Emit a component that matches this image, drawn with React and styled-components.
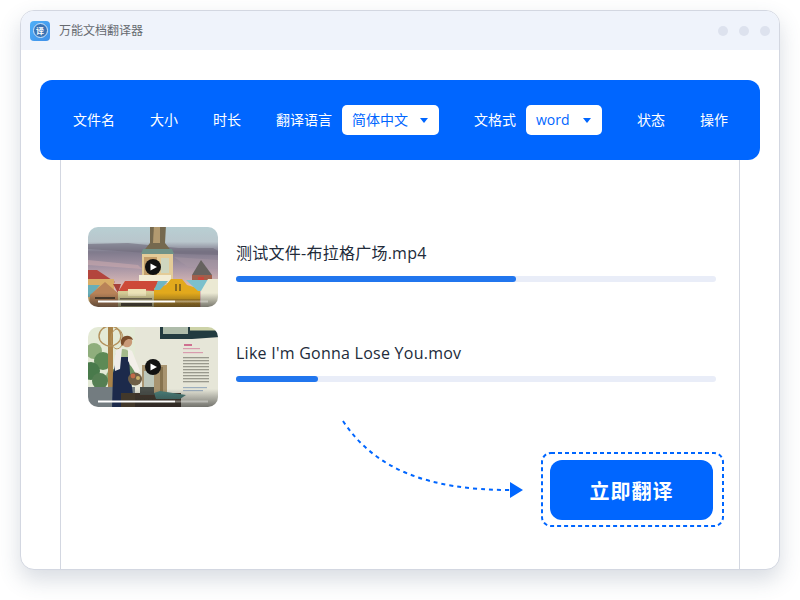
import React from 'react'
import styled, { createGlobalStyle } from 'styled-components'

const files = [
  { id: 1, name: '测试文件-布拉格广场.mp4', progress: 280, Picture: PragueScene },
  { id: 2, name: "Like I'm Gonna Lose You.mov", progress: 82, Picture: GardenScene },
]

function PragueScene() {
  return (
    <g filter="url(#soft)">
      <rect x="-2" y="-2" width="134" height="84" fill="url(#praguesky)" />
      <path d="M0 17 L40 16 L90 21 L125 21 L130 24 L130 28 L60 26 L0 22Z" fill="#6f6a7c" opacity=".6" />
      <path d="M0 33 L50 38 L54 42 L0 38Z" fill="#c9a9ad" opacity=".6" />
      <path d="M86 30 L130 33 L130 42 L100 40Z" fill="#a797a3" opacity=".5" />
      <path d="M62 -2 H78 L77 16 L85 26 H54 L62 16Z" fill="#75694f" />
      <path d="M66 -2 H72 L72 16 H65Z" fill="#b29a70" />
      <path d="M55 22 H84 L86 27 H53Z" fill="#6f9388" />
      <rect x="54" y="27" width="31" height="26" fill="#e4cc98" />
      <rect x="56" y="30" width="13" height="20" fill="#c39e6a" />
      <rect x="73" y="31" width="8" height="15" fill="#cfd6bf" />
      <rect x="51" y="48" width="32" height="8" fill="#f3ecd4" />
      <path d="M104 48 L113 33 L124 48Z" fill="#66625f" />
      <path d="M104 48 H124 V53 H104Z" fill="#a15f4c" />
      <rect x="110" y="50" width="6" height="4" fill="#c7473a" />
      <path d="M-2 43 H9 L27 55 L20 60 H-2Z" fill="#b3453c" />
      <rect x="-2" y="52" width="28" height="30" fill="#d9ae68" />
      <path d="M-2 58 H12 L2 70 H-2Z" fill="#69aeb8" />
      <path d="M2 82 V68 L17 55 L31 67 V82Z" fill="#b98358" />
      <rect x="7" y="70" width="20" height="2" fill="#4e3d2c" />
      <path d="M25 57 H33 L30 66Z" fill="#a7433a" />
      <path d="M30 65 L37 54 H70 L67 64 L46 63Z" fill="#cd4a38" />
      <rect x="30" y="64" width="37" height="18" fill="#d4cc95" />
      <path d="M40 62 H58 V69 H40Z" fill="#ece3b7" />
      <rect x="32" y="71" width="32" height="1.5" fill="#7a7058" />
      <rect x="33" y="76" width="31" height="3" fill="#4d4535" />
      <path d="M66 82 V61 L78 58 L83 52 H94 L99 58 L112 62 V82Z" fill="#e2a91c" />
      <rect x="87" y="57" width="2" height="7" fill="#8c6a1c" />
      <rect x="91" y="57" width="2" height="7" fill="#8c6a1c" />
      <rect x="66" y="72" width="46" height="10" fill="#bd8a1e" />
      <path d="M70 54 H80 L72 63 H66Z" fill="#6fb6c4" />
      <path d="M98 53 H122 L117 64 H110Z" fill="#7cc0cc" />
      <path d="M113 64 L120 52 H132 V82 H113Z" fill="#ebe9d3" />
      <rect x="-2" y="66" width="134" height="16" fill="url(#fade)" />
    </g>
  )
}

function GardenScene() {
  const greens = [
    [6, 24, 8, '#8fae7c'],
    [15, 34, 9, '#5d8a57'],
    [3, 44, 9, '#4a7a4c'],
    [35, 30, 8, '#a3b98a'],
    [38, 46, 9, '#6d9463'],
    [26, 50, 8, '#8aa66e'],
    [12, 54, 8, '#557f53'],
  ]
  return (
    <g filter="url(#soft)">
      <rect x="-2" y="-2" width="50" height="64" fill="#e4ead6" />
      {greens.map(([cx, cy, r, fill]) => (
        <circle key={cx + '-' + cy} cx={cx} cy={cy} r={r} fill={fill} />
      ))}
      <rect x="20" y="-2" width="5" height="62" fill="#a98348" />
      <ellipse cx="22" cy="9" rx="11" ry="10" fill="none" stroke="#b3915c" strokeWidth="1.4" />
      <ellipse cx="29" cy="12" rx="6" ry="10" fill="none" stroke="#b3915c" strokeWidth="1" />
      <rect x="-2" y="60" width="50" height="22" fill="#737c80" />
      <rect x="47" y="-2" width="85" height="84" fill="#e6e6d8" />
      <path d="M72 -2 H132 V10 L104 12 H72Z" fill="#233a40" />
      <rect x="75" y="-2" width="25" height="9" fill="#aebcaa" />
      <rect x="102" y="-2" width="30" height="5.5" fill="#cdd3a8" />
      <rect x="54" y="38" width="25" height="30" fill="#a8946f" />
      <rect x="56" y="44" width="10" height="24" fill="#bcc6ba" />
      <rect x="72" y="40" width="3" height="28" fill="#86734f" />
      <path d="M24 82 L25 46 L29 30 H41 L42 46 L47 82Z" fill="#1a2a4c" />
      <path d="M28 23 L34 21 L32 42 L27 44 L26 34Z" fill="#efece8" />
      <path d="M40 22 L44 24 L52 44 L48 47 L40 34Z" fill="#f3efe9" />
      <circle cx="39" cy="15" r="5.2" fill="#c99a78" />
      <path d="M33 17 C31 8 43 6 45 13 C40 11 37 12 35 19Z" fill="#7a4d2c" />
      <ellipse cx="47" cy="52" rx="7" ry="6.5" fill="#6e5e46" />
      <circle cx="45" cy="49" r="2.4" fill="#c26c48" />
      <circle cx="50" cy="51" r="2" fill="#c9b26a" />
      <rect x="33" y="66" width="60" height="16" fill="#43372c" />
      <path d="M66 66 L72 64 L98 68 L92 72 H68Z" fill="#4a7f7a" />
      <rect x="52" y="60" width="14" height="8" fill="#4a4f4a" />
      <rect x="96" y="17" width="8" height="2" fill="#cf6f90" />
      <rect x="95" y="21" width="17" height="1.2" fill="#d68aa4" opacity=".8" />
      <rect x="95" y="25" width="20" height="1.2" fill="#d68aa4" opacity=".8" />
      {[30, 33, 36, 39, 42, 45, 48, 51, 54].map((y) => (
        <rect key={y} x="95" y={y} width="26" height="1.3" fill="#77776e" opacity=".7" />
      ))}
      <rect x="95" y="60" width="24" height="1.2" fill="#8aa0b8" opacity=".8" />
      <rect x="95" y="63" width="20" height="1.2" fill="#8aa0b8" opacity=".8" />
      <rect x="47" y="62" width="85" height="20" fill="url(#fade)" />
    </g>
  )
}

const App = () => {
  return (
    <>
      <GlobalStyle />
      <Page>
        <Window>
          <TitleBar>
            <AppIcon>
              <IconBubble>译</IconBubble>
            </AppIcon>
            <AppName>万能文档翻译器</AppName>
            <WindowDots>
              <Dot />
              <Dot />
              <Dot />
            </WindowDots>
          </TitleBar>
          <Main>
            <HeaderBar>
              <HeaderLabel>文件名</HeaderLabel>
              <HeaderLabel>大小</HeaderLabel>
              <HeaderLabel>时长</HeaderLabel>
              <HeaderGroup>
                <HeaderLabel>翻译语言</HeaderLabel>
                <Select $width={97}>
                  简体中文
                  <Caret />
                </Select>
              </HeaderGroup>
              <HeaderGroup>
                <HeaderLabel>文格式</HeaderLabel>
                <Select $width={76}>
                  word
                  <Caret />
                </Select>
              </HeaderGroup>
              <HeaderLabel>状态</HeaderLabel>
              <HeaderLabel>操作</HeaderLabel>
            </HeaderBar>
            <Body>
              <FileList>
                {files.map(({ id, name, progress, Picture }) => (
                  <FileRow key={id}>
                    <Thumb>
                      <ThumbSvg viewBox="0 0 130 80">
                        <defs>
                          <linearGradient id="praguesky" x1="0" y1="0" x2="0" y2="1">
                            <stop offset="0" stopColor="#b8d0d4" />
                            <stop offset=".2" stopColor="#b9c6cc" />
                            <stop offset=".32" stopColor="#7f7a8c" />
                            <stop offset=".5" stopColor="#a594a4" />
                            <stop offset=".72" stopColor="#dcbab6" />
                          </linearGradient>
                          <linearGradient id="fade" x1="0" y1="0" x2="0" y2="1">
                            <stop offset="0" stopColor="#222" stopOpacity="0" />
                            <stop offset="1" stopColor="#222" stopOpacity=".65" />
                          </linearGradient>
                          <filter id="soft">
                            <feGaussianBlur stdDeviation=".7" />
                          </filter>
                        </defs>
                        <Picture />
                        <rect x="10" y="73.5" width="77" height="2" fill="#fff" />
                        <rect x="87" y="73.5" width="33" height="2" fill="#fff" opacity=".35" />
                        <circle cx="65" cy="40" r="8" fill="#111" />
                        <path d="M62.5 36.5 L69 40 L62.5 43.5Z" fill="#fff" />
                      </ThumbSvg>
                    </Thumb>
                    <FileInfo>
                      <FileName>{name}</FileName>
                      <Track>
                        <Fill style={{ width: progress }} />
                      </Track>
                    </FileInfo>
                  </FileRow>
                ))}
              </FileList>
              <ArrowSvg width="190" height="90" viewBox="0 0 190 90">
                <path
                  d="M5 6 C37 55 92 75 172 75"
                  fill="none"
                  stroke="#0066ff"
                  strokeWidth="2"
                  strokeDasharray="4 4"
                />
                <path d="M172 67 L185 75 L172 83Z" fill="#0066ff" />
              </ArrowSvg>
              <Footer>
                <DashedFrame>
                  <DashedOutline width="183" height="75" viewBox="0 0 183 75">
                    <rect
                      x="1"
                      y="1"
                      width="181"
                      height="73"
                      rx="9"
                      fill="none"
                      stroke="#0066ff"
                      strokeWidth="2"
                      strokeDasharray="4 3"
                    />
                  </DashedOutline>
                  <TranslateButton>立即翻译</TranslateButton>
                </DashedFrame>
              </Footer>
            </Body>
          </Main>
        </Window>
      </Page>
    </>
  )
}

const GlobalStyle = createGlobalStyle`
  html, body {
    margin: 0;
    padding: 0;
    background: #fff;
  }
  * {
    box-sizing: border-box;
  }
  body {
    font-family: "Open Sans", "Noto Sans CJK SC", sans-serif;
  }
`

const Page = styled.div`
  width: 800px;
  height: 600px;
  padding: 10px 20px 30px;
  overflow: hidden;
`

const Window = styled.div`
  height: 560px;
  display: flex;
  flex-direction: column;
  background: #fff;
  border: 1px solid #d3d7e1;
  border-radius: 14px;
  box-shadow: 0 10px 22px rgba(60, 80, 110, 0.2);
  overflow: hidden;
`

const TitleBar = styled.div`
  height: 39px;
  flex: none;
  display: flex;
  align-items: center;
  padding: 0 9px;
  background: #eff3fb;
`

const AppIcon = styled.div`
  width: 20px;
  height: 20px;
  display: flex;
  align-items: center;
  justify-content: center;
  border-radius: 4px;
  background: linear-gradient(135deg, #4fb0f8, #3f8fe8);
`

const IconBubble = styled.div`
  width: 15px;
  height: 15px;
  display: flex;
  align-items: center;
  justify-content: center;
  border-radius: 50%;
  border: 1px solid #cfe6fb;
  background: #3b73b4;
  color: #fff;
  font-size: 8px;
  font-weight: 700;
  line-height: 1;
`

const AppName = styled.span`
  margin-left: 9px;
  font-size: 12px;
  line-height: 18px;
  color: #666a70;
`

const WindowDots = styled.div`
  margin-left: auto;
  display: flex;
  gap: 11px;
`

const Dot = styled.span`
  width: 10px;
  height: 10px;
  border-radius: 50%;
  background: #dde2ee;
`

const Main = styled.div`
  flex: 1;
  display: flex;
  flex-direction: column;
  padding-top: 30px;
  padding-inline: 19px;
  min-height: 0;
`

const HeaderBar = styled.div`
  height: 80px;
  flex: none;
  display: flex;
  align-items: center;
  gap: 35px;
  padding-left: 33px;
  background: #0066ff;
  border-radius: 12px;
`

const HeaderGroup = styled.div`
  display: flex;
  align-items: center;
  gap: 10px;
`

const HeaderLabel = styled.span`
  font-size: 14px;
  line-height: 20px;
  color: #fff;
  white-space: nowrap;
`

const Select = styled.div`
  width: ${(props) => props.$width}px;
  height: 30px;
  display: flex;
  align-items: center;
  justify-content: space-between;
  padding: 0 11px 0 10px;
  font-size: 14px;
  line-height: 20px;
  color: #0066ff;
  background: #fff;
  border-radius: 5px;
`

const Caret = styled.span`
  width: 0;
  height: 0;
  border-left: 4.5px solid transparent;
  border-right: 4.5px solid transparent;
  border-top: 5.5px solid #0066ff;
`

const Body = styled.div`
  position: relative;
  flex: 1;
  display: flex;
  flex-direction: column;
  margin: 0 20px;
  padding: 67px 15px 0 27px;
  border-left: 1px solid #d3d7e1;
  border-right: 1px solid #d3d7e1;
`

const FileList = styled.div`
  display: flex;
  flex-direction: column;
  gap: 20px;
`

const FileRow = styled.div`
  display: flex;
  gap: 18px;
`

const Thumb = styled.div`
  width: 130px;
  height: 80px;
  flex: none;
  border-radius: 10px;
  overflow: hidden;
`

const ThumbSvg = styled.svg`
  display: block;
  width: 130px;
  height: 80px;
`

const FileInfo = styled.div`
  width: 480px;
  padding-top: 15px;
`

const FileName = styled.div`
  height: 22px;
  margin-bottom: 12px;
  font-size: 16px;
  line-height: 22px;
  letter-spacing: 0.25px;
  color: #222b3a;
`

const Track = styled.div`
  height: 6px;
  background: #e9edf8;
  border-radius: 3px;
`

const Fill = styled.div`
  height: 100%;
  background: #2176ee;
  border-radius: 3px;
`

const ArrowSvg = styled.svg`
  position: absolute;
  left: 277px;
  top: 255px;
`

const Footer = styled.div`
  display: flex;
  justify-content: flex-end;
  margin-top: 45px;
`

const DashedFrame = styled.div`
  position: relative;
  width: 183px;
  height: 75px;
  padding: 8px 11px 7px 9px;
`

const DashedOutline = styled.svg`
  position: absolute;
  left: 0;
  top: 0;
`

const TranslateButton = styled.div`
  height: 60px;
  display: flex;
  align-items: center;
  justify-content: center;
  font-size: 20px;
  font-weight: 700;
  letter-spacing: 1px;
  color: #fff;
  background: #0066ff;
  border-radius: 12px;
`

export default App
